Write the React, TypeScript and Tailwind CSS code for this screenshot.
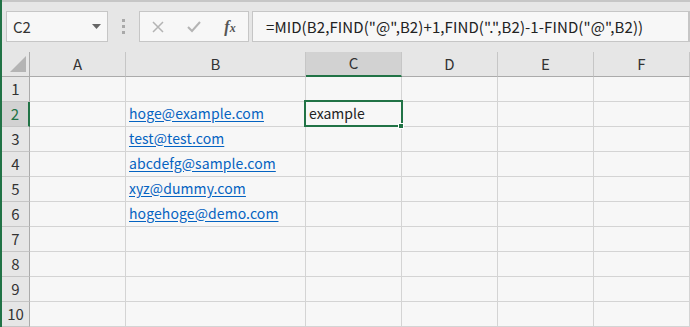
const cols = ["A", "B", "C", "D", "E", "F"];
const rows = [1, 2, 3, 4, 5, 6, 7, 8, 9, 10];

const emails: Record<number, string> = {
  2: "hoge@example.com",
  3: "test@test.com",
  4: "abcdefg@sample.com",
  5: "xyz@dummy.com",
  6: "hogehoge@demo.com",
};

const font = { fontFamily: '"Noto Sans CJK JP", "Noto Sans", sans-serif' };

function Toolbar() {
  return (
    <div className="h-[52px] bg-[#e6e6e6] border-t-2 border-[#c6c6c6] flex items-start pt-[9px] pl-[4px]">
      <div className="w-[102px] h-[31px] bg-[#f7f7f7] border border-[#c6c6c6] flex items-center justify-between pl-[6px] pr-[6px]">
        <span className="text-[15px] text-[#333] leading-none">C2</span>
        <svg width="9" height="5" viewBox="0 0 9 5">
          <path d="M0 0h9L4.5 5z" fill="#666" />
        </svg>
      </div>
      <div className="w-[31px] h-[31px] flex flex-col items-center justify-center gap-[3px]">
        <span className="w-[3px] h-[3px] bg-[#a9a9a9]" />
        <span className="w-[3px] h-[3px] bg-[#a9a9a9]" />
        <span className="w-[3px] h-[3px] bg-[#a9a9a9]" />
      </div>
      <div className="w-[110px] h-[31px] bg-[#f7f7f7] border border-[#c6c6c6] flex items-center">
        <div className="w-[36px] flex justify-center">
          <svg width="12" height="12" viewBox="0 0 12 12">
            <path d="M1 1l10 10M11 1L1 11" stroke="#b4b4b4" strokeWidth="1.5" />
          </svg>
        </div>
        <div className="w-[36px] flex justify-center">
          <svg width="14" height="12" viewBox="0 0 14 12">
            <path d="M1 6l4 4 8-9" stroke="#b4b4b4" strokeWidth="2" fill="none" />
          </svg>
        </div>
        <div className="w-[36px] flex justify-center">
          <span
            className="text-[16px] italic font-bold text-[#555] leading-none"
            style={{ fontFamily: '"Liberation Serif", serif' }}
          >
            f<span className="text-[12px]">x</span>
          </span>
        </div>
      </div>
      <div className="ml-[3px] flex-1 h-[31px] bg-[#f7f7f7] border border-[#c6c6c6] border-r-0 flex items-center pl-[13px]">
        <span className="text-[15px] text-[#222] leading-none whitespace-nowrap tracking-[0.1px]">
          =MID(B2,FIND("@",B2)+1,FIND(".",B2)-1-FIND("@",B2))
        </span>
      </div>
      <div className="w-[2px] h-[31px] bg-[#c6c6c6]" />
    </div>
  );
}

export default function App() {
  return (
    <div className="w-[690px] h-[327px] overflow-hidden bg-[#e6e6e6] flex" style={font}>
      <div className="w-[2px] bg-[#217346]" />
      <div className="flex-1 flex flex-col">
        <Toolbar />
        <div className="grid grid-cols-[28px_96px_180px_96px_96px_96px_96px] auto-rows-[25px] bg-[#f7f7f7]">
          <div className="bg-[#e6e6e6] border-r border-b border-[#ababab] relative">
            <svg className="absolute right-[3px] bottom-[4px]" width="16" height="16" viewBox="0 0 16 16">
              <path d="M16 0V16H0z" fill="#b4b4b4" />
            </svg>
          </div>
          {cols.map((c) =>
            c === "C" ? (
              <div
                key={c}
                className="bg-[#d2d2d2] border-r border-[#c6c6c6] border-b-2 border-b-[#217346] flex items-center justify-center text-[15px] text-[#333]"
              >
                {c}
              </div>
            ) : (
              <div
                key={c}
                className="bg-[#e6e6e6] border-r border-[#c6c6c6] border-b border-b-[#ababab] flex items-center justify-center text-[15px] text-[#333]"
              >
                {c}
              </div>
            )
          )}
          {rows.map((r) => (
            <Row key={r} r={r} />
          ))}
        </div>
      </div>
    </div>
  );
}

function Row({ r }: { r: number }) {
  const active = r === 2;
  return (
    <>
      <div
        className={
          active
            ? "bg-[#d2d2d2] border-r-2 border-r-[#217346] border-b border-b-[#c6c6c6] flex items-center justify-center text-[15px] text-[#217346]"
            : "bg-[#e6e6e6] border-r border-r-[#ababab] border-b border-b-[#c6c6c6] flex items-center justify-center text-[15px] text-[#333]"
        }
      >
        {r}
      </div>
      {cols.map((c) => (
        <div
          key={c}
          className="relative border-r border-b border-[#d4d4d4] flex items-center px-[3px] pb-[2px] text-[14px] text-[#222] whitespace-nowrap"
        >
          {c === "B" && emails[r] && (
            <span className="text-[#0563c1] underline underline-offset-2 tracking-[0.1px]">{emails[r]}</span>
          )}
          {c === "C" && r === 2 && (
            <>
              <span>example</span>
              <div className="absolute z-10 -left-[2px] -top-[2px] -right-[2px] -bottom-[1px] border-2 border-[#217346]" />
              <div className="absolute z-20 -right-[3px] -bottom-[3px] w-[6px] h-[6px] bg-[#217346] border border-white" />
            </>
          )}
        </div>
      ))}
    </>
  );
}
